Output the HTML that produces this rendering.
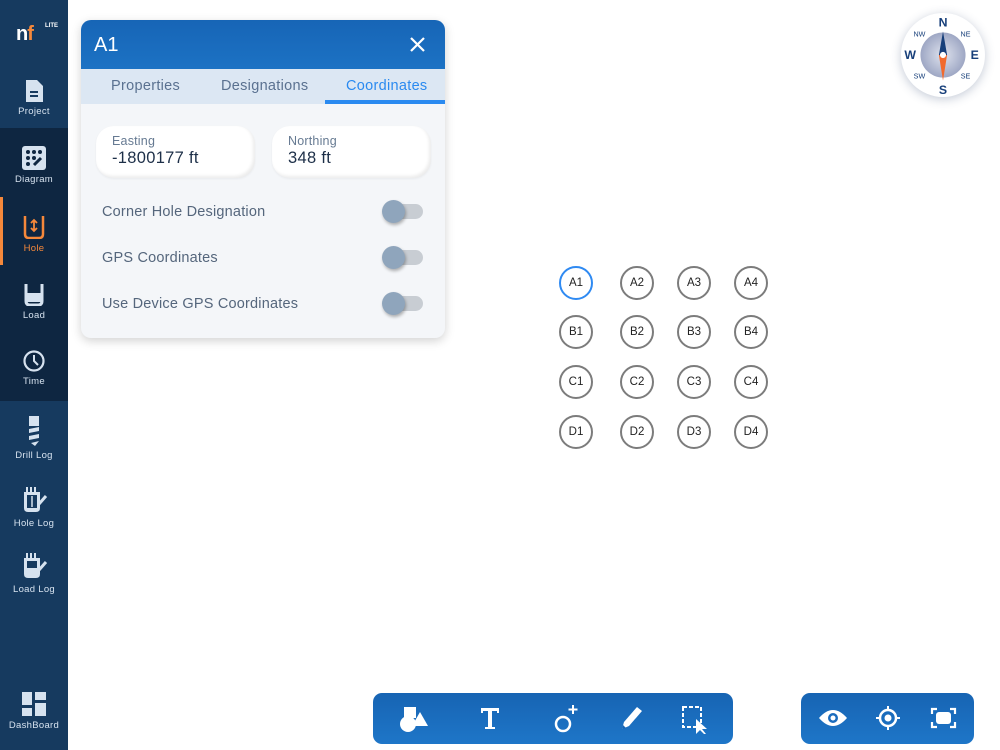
<!DOCTYPE html>
<html><head><meta charset="utf-8"><style>
*{box-sizing:border-box;margin:0;padding:0}
body{width:1000px;height:750px;position:relative;background:#fff;font-family:"Liberation Sans",sans-serif;overflow:hidden}
.sb{position:absolute;left:0;top:0;width:68px;height:750px;background:#163a5f}
.sb .dark{position:absolute;left:0;top:128px;width:68px;height:273px;background:#0e2641}
.it{position:absolute;left:0;width:68px;text-align:center;color:#d6e2ef;font-size:9.5px;letter-spacing:.3px}
.it svg{display:block;margin:0 auto 4px}
.panel{position:absolute;left:81px;top:20px;width:364px;height:318px;background:#f4f6f9;border-radius:10px;box-shadow:0 3px 10px rgba(0,0,0,.18);overflow:hidden}
.hdr{height:49px;background:linear-gradient(#1765b6,#1c72c4);color:#fff;font-size:20px;padding:14px 0 0 13px;position:relative}
.tabs{height:35px;background:#dce7f3;position:relative;font-size:14.5px;color:#5a7190;letter-spacing:.3px}
.tabs span{position:absolute;top:9px}
.field{position:absolute;top:106px;height:52px;background:#fff;border-radius:18px;box-shadow:-2px -2px 3px rgba(0,0,0,.08) inset,0 1px 2px rgba(0,0,0,.05);padding:8px 0 0 16px}
.field .l{font-size:12.5px;color:#667a92;letter-spacing:.2px}
.field .v{font-size:16.5px;color:#1d2f48;margin-top:1px;letter-spacing:.3px}
.row{position:absolute;left:21px;font-size:14.5px;color:#55667c;letter-spacing:.2px}
.tg{position:absolute;left:303px;width:39px;height:15px;border-radius:8px;background:#c8cdd3}
.tg:before{content:"";position:absolute;left:-2px;top:-4px;width:23px;height:23px;border-radius:50%;background:#8fa5bc;box-shadow:1px 2px 3px rgba(0,0,0,.3)}
.c{position:absolute;width:34px;height:34px;border:2px solid #7c7c7c;border-radius:50%;font-size:11.5px;color:#222;text-align:center;line-height:30px}
.bar{position:absolute;top:693px;height:51px;border-radius:9px;background:linear-gradient(#1764b3,#1e76c8)}
</style></head><body>
<div class="sb"><div class="dark"></div>
<div style="position:absolute;left:0;top:197px;width:3px;height:68px;background:#f5883b"></div>
<div style="position:absolute;left:16px;top:23px;color:#fff;font-size:20px;font-weight:bold;letter-spacing:-1px">n<span style="color:#f5883b">f</span></div>
<div style="position:absolute;left:45px;top:23px;color:#fff;font-size:6px;font-weight:bold">LITE</div>
<div class="it" style="top:80px"><svg width="20" height="22" viewBox="0 0 20 22"><path d="M2 0h11l6 6v16H2z" fill="#d6e2ef"/><path d="M6 12h8M6 16h8" stroke="#163a5f" stroke-width="2"/></svg>Project</div>
<div class="it" style="top:146px"><svg width="24" height="24" viewBox="0 0 24 24"><rect width="24" height="24" rx="3" fill="#d6e2ef"/><g fill="#0e2641"><circle cx="6" cy="6" r="2"/><circle cx="12" cy="6" r="2"/><circle cx="18" cy="6" r="2"/><circle cx="6" cy="12" r="2"/><circle cx="12" cy="12" r="2"/><circle cx="6" cy="18" r="2"/></g><path d="M12 19l7-7" stroke="#0e2641" stroke-width="3"/></svg>Diagram</div>
<div class="it" style="top:215px;color:#f5883b"><svg width="22" height="24" viewBox="0 0 22 24"><path d="M2 1v18q0 4 4 4h10q4 0 4-4V1" fill="none" stroke="#f5883b" stroke-width="2.5"/><path d="M11 5v11M8 8l3-3 3 3M8 13l3 3 3-3" stroke="#f5883b" stroke-width="1.8" fill="none"/></svg>Hole</div>
<div class="it" style="top:284px"><svg width="20" height="22" viewBox="0 0 20 22"><path d="M2 0v17q0 4 4 4h8q4 0 4-4V0" fill="none" stroke="#d6e2ef" stroke-width="3"/><path d="M3 9h14v9H3z" fill="#d6e2ef"/></svg>Load</div>
<div class="it" style="top:350px"><svg width="22" height="22" viewBox="0 0 22 22"><circle cx="11" cy="11" r="9.5" fill="none" stroke="#d6e2ef" stroke-width="2.2"/><path d="M11 5v6l4 4" stroke="#d6e2ef" stroke-width="2" fill="none"/></svg>Time</div>
<div class="it" style="top:416px"><svg width="12" height="30" viewBox="0 0 12 30"><rect x="1" width="10" height="10" fill="#d6e2ef"/><path d="M1 13l10-2v4L1 17zM1 20l10-2v4L1 24zM3 27l8-2-4 5z" fill="#d6e2ef"/></svg>Drill Log</div>
<div class="it" style="top:486px"><svg width="30" height="28" viewBox="0 0 30 28"><path d="M5 6h16v16q0 4-4 4H9q-4 0-4-4z" fill="#d6e2ef"/><path d="M8 1v5M12 1v5M16 1v5" stroke="#d6e2ef" stroke-width="2"/><rect x="8" y="9" width="10" height="13" fill="#163a5f"/><path d="M13 10v11" stroke="#d6e2ef" stroke-width="1.5"/><path d="M20 18l7-8" stroke="#d6e2ef" stroke-width="3"/></svg>Hole Log</div>
<div class="it" style="top:552px"><svg width="30" height="28" viewBox="0 0 30 28"><path d="M5 6h16v16q0 4-4 4H9q-4 0-4-4z" fill="#d6e2ef"/><path d="M8 1v5M12 1v5M16 1v5" stroke="#d6e2ef" stroke-width="2"/><rect x="8" y="9" width="10" height="7" fill="#163a5f"/><path d="M20 18l7-8" stroke="#d6e2ef" stroke-width="3"/></svg>Load Log</div>
<div class="it" style="top:692px"><svg width="24" height="24" viewBox="0 0 24 24" fill="#d6e2ef"><rect width="10" height="13"/><rect x="13" width="11" height="8"/><rect y="16" width="10" height="8"/><rect x="13" y="11" width="11" height="13"/></svg>DashBoard</div>
</div>

<div class="panel">
<div class="hdr">A1<svg style="position:absolute;left:329px;top:17px" width="15" height="15" viewBox="0 0 15 15"><path d="M1 1l13 13M14 1L1 14" stroke="#fff" stroke-width="2.2"/></svg></div>
<div class="tabs"><span style="left:30px">Properties</span><span style="left:140px">Designations</span><span style="left:265px;color:#2a8af0">Coordinates</span><div style="position:absolute;left:244px;top:31px;width:120px;height:4px;background:#2a8af0"></div></div>
<div class="field" style="left:15px;width:159px"><div class="l">Easting</div><div class="v">-1800177 ft</div></div>
<div class="field" style="left:191px;width:159px"><div class="l">Northing</div><div class="v">348 ft</div></div>
<div class="row" style="top:184px">Corner Hole Designation</div><div class="tg" style="top:184px"></div>
<div class="row" style="top:230px">GPS Coordinates</div><div class="tg" style="top:230px"></div>
<div class="row" style="top:276px">Use Device GPS Coordinates</div><div class="tg" style="top:276px"></div>
</div>

<div style="position:absolute;left:901px;top:13px;width:84px;height:84px;border-radius:50%;background:#fff;box-shadow:0 2px 10px rgba(60,80,120,.3)">
<svg width="84" height="84" viewBox="0 0 82 82"><defs><radialGradient id="g"><stop offset="0" stop-color="#dfe3ee"/><stop offset="1" stop-color="#9ea7c4"/></radialGradient></defs>
<circle cx="41" cy="41" r="22" fill="url(#g)"/><path d="M41 18l-4 23h8z" fill="#173f7a"/><path d="M41 66l-4-25h8z" fill="#f26a2e"/><circle cx="41" cy="41" r="3" fill="#fff"/>
<g font-family="Liberation Sans" font-weight="bold" fill="#173f7a" text-anchor="middle"><text x="41" y="13" font-size="12">N</text><text x="41" y="79" font-size="12">S</text><text x="9" y="45" font-size="12">W</text><text x="72" y="45" font-size="12">E</text><g font-size="7" font-weight="normal"><text x="18" y="23">NW</text><text x="63" y="23">NE</text><text x="18" y="64">SW</text><text x="63" y="64">SE</text></g></g></svg></div>

<div class="c" style="left:559px;top:266px;border-color:#2f8af2">A1</div><div class="c" style="left:620px;top:266px">A2</div><div class="c" style="left:677px;top:266px">A3</div><div class="c" style="left:734px;top:266px">A4</div>
<div class="c" style="left:559px;top:315px">B1</div><div class="c" style="left:620px;top:315px">B2</div><div class="c" style="left:677px;top:315px">B3</div><div class="c" style="left:734px;top:315px">B4</div>
<div class="c" style="left:559px;top:365px">C1</div><div class="c" style="left:620px;top:365px">C2</div><div class="c" style="left:677px;top:365px">C3</div><div class="c" style="left:734px;top:365px">C4</div>
<div class="c" style="left:559px;top:415px">D1</div><div class="c" style="left:620px;top:415px">D2</div><div class="c" style="left:677px;top:415px">D3</div><div class="c" style="left:734px;top:415px">D4</div>

<div class="bar" style="left:373px;width:360px">
<svg width="360" height="51" viewBox="0 0 360 51" fill="#fff">
<rect x="31" y="14" width="12" height="11"/><circle cx="35" cy="31" r="8"/><path d="M39 33l8-14 8 14z"/>
<path d="M108 15h18v5h-2v-2h-5v16h3v2h-10v-2h3V18h-5v2h-2z"/>
<circle cx="190" cy="31" r="7" fill="none" stroke="#fff" stroke-width="2.5"/><path d="M200 12v9M195.5 16.5h9" stroke="#fff" stroke-width="2"/>
<path d="M249 36l2-7 13-15 5 4-13 15z"/><path d="M249 36l1-4 3 3z" fill="#1764b3"/>
<rect x="310" y="14" width="18" height="20" fill="none" stroke="#fff" stroke-width="2" stroke-dasharray="4 2"/><path d="M323 26v15l4-4 4 4h2l-4-5h5z"/>
</svg></div>
<div class="bar" style="left:801px;width:173px">
<svg width="173" height="51" viewBox="0 0 173 51" fill="#fff">
<path d="M18 25q14-16 28 0q-14 16-28 0z"/><circle cx="32" cy="25" r="5" fill="#1a6bbd"/><circle cx="32" cy="25" r="2.5"/>
<circle cx="87" cy="25" r="8" fill="none" stroke="#fff" stroke-width="2.5"/><circle cx="87" cy="25" r="3.5"/><path d="M87 13v4M87 33v4M75 25h4M95 25h4" stroke="#fff" stroke-width="2"/>
<path d="M131 21v-5h5M149 16h5v5M154 29v5h-5M136 34h-5v-5" fill="none" stroke="#fff" stroke-width="2.2"/><rect x="135" y="19" width="15" height="12" rx="3"/>
</svg></div>
</body></html>
